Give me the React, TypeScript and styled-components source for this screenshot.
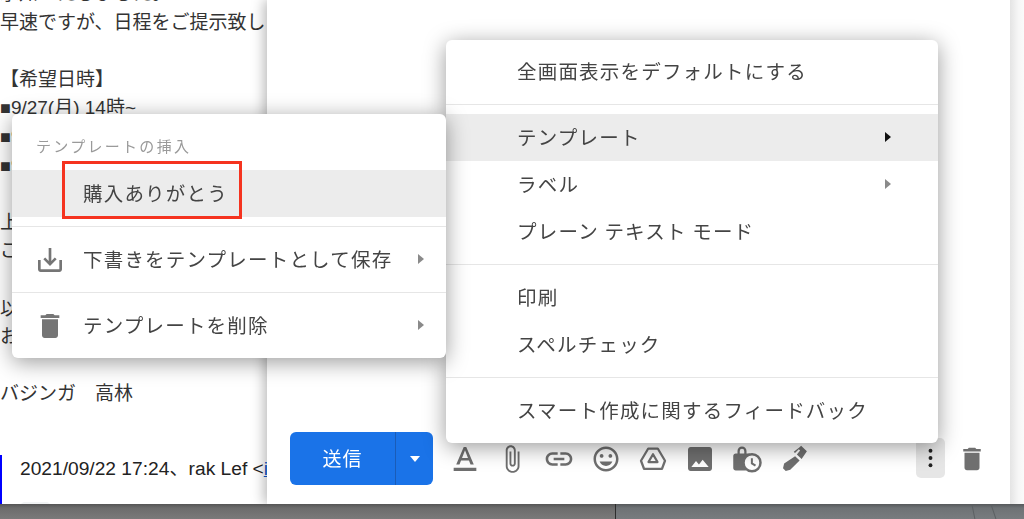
import React from "react";
import styled, { createGlobalStyle } from "styled-components";

const Global = createGlobalStyle`
  html, body { margin: 0; padding: 0; height: 100%; background: #fff; overflow: hidden; }
  body { font-family: "Liberation Sans", "Noto Sans CJK JP", sans-serif; }
`;

const Page = styled.div`
  position: relative;
  width: 1024px;
  height: 519px;
  overflow: hidden;
  display: grid;
  grid-template-columns: 267px 743px 14px;
  grid-template-rows: 504px 15px;
  filter: blur(0.35px);
`;

const EmailPane = styled.div`
  overflow: hidden;
  background: #fff;
  color: #333;
  font-size: 19px;
  line-height: 28.6px;
  white-space: nowrap;
  display: flex;
  flex-direction: column;
`;

const EmailBody = styled.div`
  margin-top: -20px;
`;

const Line = styled.div`
  height: 28.6px;
`;

const Square = styled.span`
  font-size: 18px;
  letter-spacing: 0;
`;

const Quote = styled.div`
  margin-top: 46px;
  flex: 1;
  border-left: 2px solid #0000ff;
  padding-left: 18px;
  color: #222;
  font-size: 19.2px;
`;

const QuoteLine = styled.div`
  height: 28.6px;
`;

const MailLink = styled.span`
  color: #1155cc;
  text-decoration: underline;
`;

const Expander = styled.div`
  width: 31px;
  height: 12px;
  margin-top: 18px;
  border-radius: 5px;
  background: #f1f3f4;
`;

const ComposePane = styled.div`
  background: #fff;
  box-shadow: -3px 0 12px rgba(0, 0, 0, 0.28);
  position: relative;
  z-index: 1;
  display: flex;
  flex-direction: column;
  justify-content: flex-end;
`;

const Toolbar = styled.div`
  display: flex;
  align-items: center;
  height: 53px;
  padding: 0 23px 19px 23px;
`;

const SendGroup = styled.div`
  display: flex;
  width: 143px;
  height: 52.5px;
  border-radius: 6px;
  overflow: hidden;
  background: #1a73e8;
  color: #fff;
  margin-right: 8.5px;
`;

const SendLabel = styled.div`
  width: 106px;
  display: flex;
  align-items: center;
  justify-content: center;
  padding-bottom: 3px;
  box-sizing: border-box;
  font-size: 19px;
  letter-spacing: 1px;
  border-right: 1.5px solid #1a5cb8;
`;

const SendCaret = styled.div`
  flex: 1;
  display: flex;
  align-items: center;
  justify-content: center;
`;

const Caret = styled.div`
  width: 0;
  height: 0;
  border-left: 5.5px solid transparent;
  border-right: 5.5px solid transparent;
  border-top: 6px solid #fff;
`;

const ToolIcon = styled.div`
  width: 47px;
  height: 47px;
  display: flex;
  align-items: center;
  justify-content: center;
  color: #6f6f6f;
`;

const Spacer = styled.div`
  flex: 1;
`;

const MoreButton = styled.div`
  width: 29px;
  height: 40px;
  margin-top: -2px;
  display: flex;
  align-items: center;
  justify-content: center;
  background: #e6e6e6;
  border-radius: 5px;
  color: #222;
  margin-right: 12px;
`;

const TrashButton = styled.div`
  width: 30px;
  display: flex;
  justify-content: center;
  color: #6f6f6f;
`;

const RightEdge = styled.div`
  background: linear-gradient(90deg, #e4e4e4, #f6f6f6 60%, #fafafa);
  position: relative;
  z-index: 1;
`;

const Taskbar = styled.div`
  grid-column: 1 / -1;
  position: relative;
  z-index: 2;
  display: grid;
  grid-template-columns: 616px 1fr;
`;

const TaskbarLeft = styled.div`
  background: linear-gradient(180deg, #555 0, #6c6c6c 4px, #7a7a7a 100%);
  border-right: 1px solid #2d2d2d;
`;

const TaskbarRight = styled.div`
  background: linear-gradient(180deg, #56595b 0, #6e7275 4px, #787c7f 100%);
  overflow: hidden;
`;

const TaskbarLines = styled.svg`
  display: block;
  width: 100%;
  height: 100%;
`;

const Menu = styled.div<{ $left: number; $top: number; $width: number; $z: number }>`
  position: absolute;
  left: ${(p) => p.$left}px;
  top: ${(p) => p.$top}px;
  width: ${(p) => p.$width}px;
  z-index: ${(p) => p.$z};
  background: #fff;
  border-radius: 6px;
  box-shadow: 0 4px 22px rgba(0, 0, 0, 0.4);
  color: #444;
  font-family: "Noto Sans CJK JP", "Liberation Sans", sans-serif;
  font-size: 19.5px;
  letter-spacing: 1.2px;
  white-space: nowrap;
`;

const MenuSection = styled.div`
  padding: 9px 0;
  border-bottom: 1px solid #e6e6e6;
  &:first-child { padding-top: 8px; }
  &:last-child { border-bottom: 0; }
`;

const MenuHeader = styled.div`
  height: 48px;
  box-sizing: border-box;
  padding: 0 0 2px 24px;
  display: flex;
  align-items: center;
  font-size: 15px;
  letter-spacing: 2.3px;
  color: #9a9a9a;
`;

const Row = styled.div<{ $active?: boolean; $indent: number }>`
  position: relative;
  height: 47px;
  box-sizing: border-box;
  display: flex;
  align-items: center;
  padding-left: ${(p) => p.$indent}px;
  padding-bottom: 3px;
  background: ${(p) => (p.$active ? "#ececec" : "transparent")};
`;

const RowIcon = styled.div`
  position: absolute;
  left: 22px;
  top: 7.5px;
  width: 32px;
  height: 32px;
  color: #757575;
`;

const Arrow = styled.div<{ $dark?: boolean; $right: number }>`
  position: absolute;
  right: ${(p) => p.$right}px;
  top: 18px;
  width: 0;
  height: 0;
  border-top: 5.5px solid transparent;
  border-bottom: 5.5px solid transparent;
  border-left: 6px solid ${(p) => (p.$dark ? "#111" : "#8a8a8a")};
`;

const Highlight = styled.div`
  position: absolute;
  left: 62px;
  top: 161px;
  width: 180px;
  height: 58px;
  box-sizing: border-box;
  border: 3px solid #f5331f;
  z-index: 5;
`;

const Svg: React.FC<{ size?: number; children: React.ReactNode }> = ({ size = 30, children }) => (
  <svg width={size} height={size} viewBox="0 0 24 24" fill="currentColor">
    {children}
  </svg>
);

const trash = "M6 19c0 1.1.9 2 2 2h8c1.1 0 2-.9 2-2V7H6v12zM19 4h-3.5l-1-1h-5l-1 1H5v2h14V4z";

const emailLines = ["承知いたしました。", "早速ですが、日程をご提示致します。", "", "【希望日時】"];

export default function App() {
  return (
    <>
      <Global />
      <Page>
        <EmailPane>
          <EmailBody>
            {emailLines.map((l, i) => (
              <Line key={i}>{l}</Line>
            ))}
            <Line><Square>■</Square>9/27(月) 14時~</Line>
            <Line><Square>■</Square>9/28(火) 14時~</Line>
            <Line><Square>■</Square>9/29(水) 14時~</Line>
            <Line />
            <Line>上記の日程でお願いします。</Line>
            <Line>ご確認ください。</Line>
            <Line />
            <Line>以上、</Line>
            <Line>お願いします。</Line>
            <Line />
            <Line>バジンガ　高林</Line>
          </EmailBody>
          <Quote>
            <QuoteLine>2021/09/22 17:24、rak Lef &lt;<MailLink>info@example.com</MailLink></QuoteLine>
            <Expander />
          </Quote>
        </EmailPane>

        <ComposePane>
          <Toolbar>
            <SendGroup>
              <SendLabel>送信</SendLabel>
              <SendCaret><Caret /></SendCaret>
            </SendGroup>
            <ToolIcon>
              <Svg size={34}><path d="M4 18.2v2.2h16v-2.2H4zm5.2-5.2h5.6l1.1 2.9h2.3L12.9 3.6h-1.8L5.8 15.9h2.3l1.1-2.9zM12 5.9l2.1 5.4H9.9L12 5.9z" /></Svg>
            </ToolIcon>
            <ToolIcon>
              <Svg><path d="M16.5 6v11.5c0 2.21-1.79 4-4 4s-4-1.79-4-4V5c0-1.38 1.12-2.5 2.5-2.5s2.5 1.12 2.5 2.5v10.5c0 .55-.45 1-1 1s-1-.45-1-1V6H10v9.5c0 1.38 1.12 2.5 2.5 2.5s2.5-1.12 2.5-2.5V5c0-2.21-1.79-4-4-4S7 2.79 7 5v12.5c0 3.04 2.46 5.5 5.5 5.5s5.5-2.46 5.5-5.5V6h-1.5z" /></Svg>
            </ToolIcon>
            <ToolIcon>
              <Svg size={32}><path d="M3.9 12c0-1.71 1.39-3.1 3.1-3.1h4V7H7c-2.76 0-5 2.24-5 5s2.24 5 5 5h4v-1.9H7c-1.71 0-3.1-1.39-3.1-3.1zM8 13h8v-2H8v2zm9-6h-4v1.9h4c1.71 0 3.1 1.39 3.1 3.1s-1.39 3.1-3.1 3.1h-4V17h4c2.76 0 5-2.24 5-5s-2.24-5-5-5z" /></Svg>
            </ToolIcon>
            <ToolIcon>
              <Svg><path d="M11.99 2C6.47 2 2 6.48 2 12s4.47 10 9.99 10C17.52 22 22 17.52 22 12S17.52 2 11.99 2zM12 20c-4.42 0-8-3.58-8-8s3.58-8 8-8 8 3.58 8 8-3.58 8-8 8zm3.5-9c.83 0 1.5-.67 1.5-1.5S16.33 8 15.5 8 14 8.67 14 9.5s.67 1.5 1.5 1.5zm-7 0c.83 0 1.5-.67 1.5-1.5S9.33 8 8.5 8 7 8.67 7 9.5 7.67 11 8.5 11zm3.5 6.5c2.33 0 4.31-1.46 5.11-3.5H6.89c.8 2.04 2.78 3.5 5.11 3.5z" /></Svg>
            </ToolIcon>
            <ToolIcon>
              <Svg>
                <g fill="none" stroke="currentColor" strokeLinejoin="round">
                  <path strokeWidth="1.8" d="M8.2 3.6h7.6L21.6 13.4l-2.4 6.4H4.8L2.4 13.4z" />
                  <path strokeWidth="1.8" d="M12 8.2l3.6 6.2H8.4z" />
                </g>
              </Svg>
            </ToolIcon>
            <ToolIcon>
              <Svg size={32}><path d="M21 19V5c0-1.1-.9-2-2-2H5c-1.1 0-2 .9-2 2v14c0 1.1.9 2 2 2h14c1.1 0 2-.9 2-2zM5.5 18l3.5-4.5 2.2 2.6 2.8-3.6 4.5 5.5z" /></Svg>
            </ToolIcon>
            <ToolIcon>
              <Svg>
                <path d="M12.6 7.5h-1V5.6a3.6 3.6 0 0 0-7.2 0v1.9H3c-1.1 0-2 .9-2 2v9.6c0 1.1.9 2 2 2h8l5-11.5-1.4-2.1zM6.2 7.5V5.6a1.8 1.8 0 0 1 3.6 0v1.9H6.2z" />
                <circle cx="16" cy="15" r="6.8" fill="#fff" stroke="currentColor" strokeWidth="2" />
                <path d="M15.9 11.4v4.1l2.9 1.8" fill="none" stroke="currentColor" strokeWidth="1.6" />
              </Svg>
            </ToolIcon>
            <ToolIcon>
              <Svg>
                <path d="M16.2 2.8l1.5-1.5 4.6 4.4-4.2 6.3-3.8-3.6 2.6-3.2-1.1-1.1-3 3-1-1zM12.9 9.7l3.6 3.4-7.5 7.5-3.6.9-2.2-2.2.9-3.7z" />
              </Svg>
            </ToolIcon>
            <Spacer />
            <MoreButton>
              <Svg size={32}>
                <circle cx="12" cy="6" r="1.6" />
                <circle cx="12" cy="12" r="1.6" />
                <circle cx="12" cy="18" r="1.6" />
              </Svg>
            </MoreButton>
            <TrashButton>
              <Svg size={34}><path d={trash} /></Svg>
            </TrashButton>
          </Toolbar>
        </ComposePane>
        <RightEdge />

        <Taskbar>
          <TaskbarLeft />
          <TaskbarRight>
            <TaskbarLines viewBox="0 0 407 15" preserveAspectRatio="none">
              <path d="M355 0l3 15M374 0l5 15" stroke="#5c6063" strokeWidth="1" fill="none" />
            </TaskbarLines>
          </TaskbarRight>
        </Taskbar>

        <Menu $left={446} $top={40} $width={492} $z={3}>
          <MenuSection>
            <Row $indent={71}>全画面表示をデフォルトにする</Row>
          </MenuSection>
          <MenuSection>
            <Row $indent={71} $active>テンプレート<Arrow $dark $right={47} /></Row>
            <Row $indent={71}>ラベル<Arrow $right={47} /></Row>
            <Row $indent={71}>プレーン テキスト モード</Row>
          </MenuSection>
          <MenuSection>
            <Row $indent={71}>印刷</Row>
            <Row $indent={71}>スペルチェック</Row>
          </MenuSection>
          <MenuSection>
            <Row $indent={71}>スマート作成に関するフィードバック</Row>
          </MenuSection>
        </Menu>

        <Menu $left={12} $top={114} $width={434} $z={4}>
          <MenuSection>
            <MenuHeader>テンプレートの挿入</MenuHeader>
            <Row $indent={71} $active>購入ありがとう</Row>
          </MenuSection>
          <MenuSection>
            <Row $indent={71}>
              <RowIcon>
                <Svg size={32}><path d="M19 12v7H5v-7H3v7c0 1.1.9 2 2 2h14c1.1 0 2-.9 2-2v-7h-2zm-6 .67l2.59-2.58L17 11.5l-5 5-5-5 1.41-1.41L11 12.67V3h2z" /></Svg>
              </RowIcon>
              下書きをテンプレートとして保存
              <Arrow $right={22} />
            </Row>
          </MenuSection>
          <MenuSection>
            <Row $indent={71}>
              <RowIcon>
                <Svg size={32}><path d={trash} /></Svg>
              </RowIcon>
              テンプレートを削除
              <Arrow $right={22} />
            </Row>
          </MenuSection>
        </Menu>
        <Highlight />
      </Page>
    </>
  );
}
